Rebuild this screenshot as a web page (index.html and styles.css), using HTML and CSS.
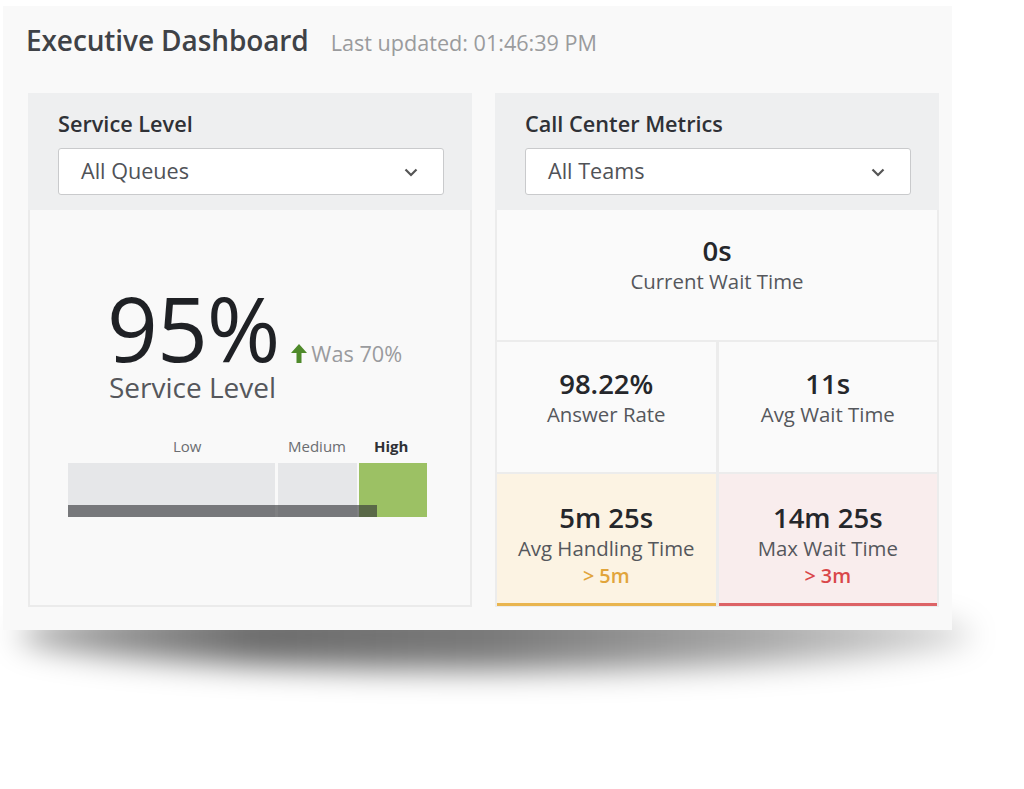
FILE: index.html
```html
<!DOCTYPE html>
<html>
<head>
<meta charset="utf-8">
<link rel="stylesheet" href="styles.css">
</head>
<body>
<div class="stage">
  <div class="card">
    <div class="top">
      <h1 class="title">Executive Dashboard</h1>
      <span class="updated">Last updated: 01:46:39 PM</span>
    </div>
    <div class="panels">
      <section class="panel">
        <div class="panel-head">
          <h2 class="panel-title">Service Level</h2>
          <div class="select"><span>All Queues</span>
            <svg class="chev" width="14" height="9" viewBox="0 0 14 9"><path d="M1.5 1.5 L7 7 L12.5 1.5" fill="none" stroke="#555" stroke-width="2.2"/></svg>
          </div>
        </div>
        <div class="sl-body">
          <div class="big-row">
            <span class="big">95%</span>
            <span class="was">
              <svg width="16" height="19" viewBox="0 0 16 19"><path d="M8 0 L16 9 L10.5 9 L10.5 19 L5.5 19 L5.5 9 L0 9 Z" fill="#4f8a2b"/></svg>Was 70%</span>
          </div>
          <div class="big-label">Service Level</div>
          <div class="gauge">
            <div class="g-labels">
              <span class="gl gl-low">Low</span>
              <span class="gl gl-med">Medium</span>
              <span class="gl gl-high">High</span>
            </div>
            <div class="g-bars">
              <div class="seg seg-low"></div>
              <div class="seg seg-med"></div>
              <div class="seg seg-high"></div>
              <div class="g-value" style="width:309px"></div>
            </div>
          </div>
        </div>
      </section>
      <section class="panel">
        <div class="panel-head">
          <h2 class="panel-title">Call Center Metrics</h2>
          <div class="select"><span>All Teams</span>
            <svg class="chev" width="14" height="9" viewBox="0 0 14 9"><path d="M1.5 1.5 L7 7 L12.5 1.5" fill="none" stroke="#555" stroke-width="2.2"/></svg>
          </div>
        </div>
        <div class="metrics">
          <div class="m m-wide"><div class="mv">0s</div><div class="ml">Current Wait Time</div></div>
          <div class="m m-mid"><div class="mv">98.22%</div><div class="ml">Answer Rate</div></div>
          <div class="m m-mid"><div class="mv">11s</div><div class="ml">Avg Wait Time</div></div>
          <div class="m m-warn"><div class="mv">5m 25s</div><div class="ml">Avg Handling Time</div><div class="mt">&gt; 5m</div></div>
          <div class="m m-bad"><div class="mv">14m 25s</div><div class="ml">Max Wait Time</div><div class="mt">&gt; 3m</div></div>
        </div>
      </section>
    </div>
  </div>
  <div class="card-shadow"></div>
</div>
</body>
</html>
```
FILE: styles.css
```css
html, body {
  margin: 0;
  padding: 0;
  background: #ffffff;
}
body {
  font-family: "Open Sans", "Noto Sans", sans-serif;
  color: #333;
  min-height: 789px;
}
.stage {
  position: relative;
  padding: 6px 0 150px 3px;
}
.card {
  position: relative;
  z-index: 2;
  width: 949px;
  height: 624px;
  background: #f9f9f9;
  box-sizing: border-box;
  padding: 0 0 0 23px;
}
.card-shadow {
  position: absolute;
  z-index: 1;
  left: 18px;
  top: 600px;
  width: 955px;
  height: 70px;
  border-radius: 50%;
  background: linear-gradient(to right, rgba(0,0,0,0.36), rgba(0,0,0,0.58) 25%, rgba(0,0,0,0.52) 50%, rgba(0,0,0,0.36) 75%, rgba(0,0,0,0.16));
  filter: blur(15px);
}
.top {
  display: flex;
  align-items: baseline;
  gap: 22px;
  height: 87px;
  padding-top: 15px;
  box-sizing: border-box;
}
.title {
  margin: 0;
  font-size: 28px;
  font-weight: 600;
  color: #3f4247;
  letter-spacing: -0.1px;
}
.updated {
  font-size: 21.6px;
  color: #9a9b9d;
}
.panels {
  display: flex;
  gap: 23px;
  margin-left: 2px;
}
.panel {
  width: 444px;
  display: flex;
  flex-direction: column;
}
.panel-head {
  background: #eeeff0;
  height: 117px;
  box-sizing: border-box;
  padding: 15px 28px 0 30px;
}
.panel-title {
  margin: 0 0 9px 0;
  font-size: 21.7px;
  font-weight: 600;
  color: #2f3136;
  line-height: 31px;
}
.select {
  height: 47px;
  box-sizing: border-box;
  background: #fff;
  border: 1px solid #c9cacc;
  border-radius: 3px;
  display: flex;
  align-items: center;
  justify-content: space-between;
  padding: 0 25px 2px 22px;
  font-size: 21.6px;
  color: #505257;
}
.chev { margin-top: 4px; }
.sl-body {
  height: 397px;
  box-sizing: border-box;
  background: #f9f9f9;
  border: 2px solid #ebebeb;
  border-top: none;
  padding: 76px 0 0 38px;
}
.big-row {
  display: flex;
  align-items: baseline;
  margin-left: 39px;
  height: 84px;
}
.big {
  font-size: 89px;
  line-height: 84px;
  color: #1f2125;
  letter-spacing: -1px;
}
.was {
  font-size: 21.7px;
  color: #9a9b9e;
  margin-left: 12px;
  display: inline-flex;
  align-items: baseline;
  gap: 4px;
}
.was svg { position: relative; top: 1px; }
.big-label {
  margin-left: 41px;
  font-size: 28px;
  color: #55575c;
  line-height: 34px;
}
.gauge {
  margin-top: 32px;
  width: 359px;
}
.g-labels {
  position: relative;
  height: 27px;
  font-size: 15px;
  line-height: 21px;
  color: #6b6d71;
}
.gl { position: absolute; top: 0; }
.gl-low { left: 105px; }
.gl-med { left: 220px; }
.gl-high { left: 306px; font-weight: 700; color: #2f3136; }
.g-bars {
  position: relative;
  display: flex;
  gap: 3px;
  height: 54px;
}
.seg { height: 100%; }
.seg-low { width: 207px; background: #e6e7e9; }
.seg-med { width: 79px; background: #e6e7e9; }
.seg-high { width: 68px; background: #9cc164; margin-left: -1px; }
.g-value {
  position: absolute;
  left: 0;
  bottom: 0;
  height: 12px;
  background: rgba(50, 52, 55, 0.62);
}
.metrics {
  height: 397px;
  box-sizing: border-box;
  background: #ececec;
  padding: 0 2px;
  display: grid;
  grid-template-columns: 1fr 1fr;
  grid-template-rows: 130px 130px 132px;
  gap: 2px 3px;
}
.m {
  background: #fafafa;
  display: flex;
  flex-direction: column;
  align-items: center;
  justify-content: flex-start;
  padding-top: 24px;
  box-sizing: border-box;
}
.m-wide { grid-column: 1 / 3; }
.m-mid { padding-top: 25px; }
.mv {
  font-size: 27.5px;
  font-weight: 600;
  color: #25272b;
  line-height: 33px;
}
.ml {
  font-size: 20.4px;
  color: #55575c;
  line-height: 29px;
}
.mt {
  font-size: 19.8px;
  font-weight: 600;
  line-height: 26px;
}
.m-warn {
  background: #fcf3e3;
  border-bottom: 3px solid #e9b54f;
  padding-top: 27px;
}
.m-warn .mt { color: #e1a43b; }
.m-bad {
  background: #f9eded;
  border-bottom: 3px solid #dd6366;
  padding-top: 27px;
}
.m-bad .mt { color: #d9474a; }
```
